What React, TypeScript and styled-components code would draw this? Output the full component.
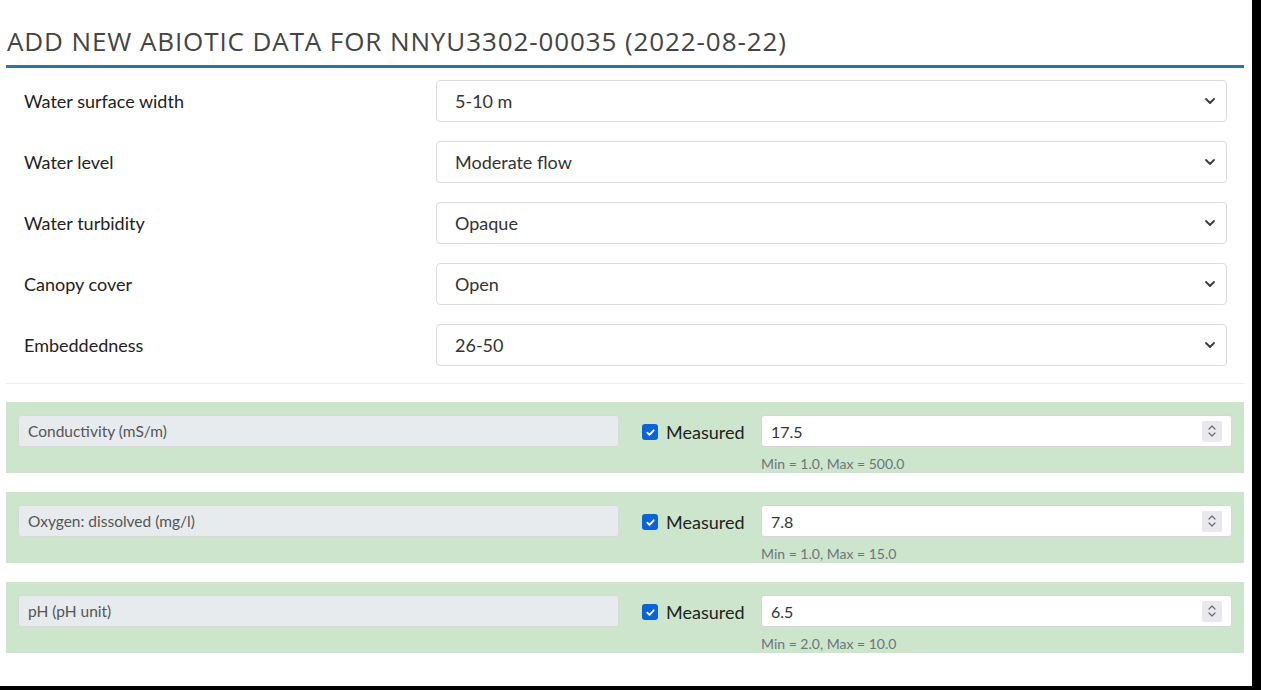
import React from 'react';
import styled, { createGlobalStyle } from 'styled-components';

const GlobalStyle = createGlobalStyle`
  html, body {
    margin: 0;
    padding: 0;
    background: #000;
  }
  * {
    box-sizing: border-box;
  }
`;

const Page = styled.div`
  width: 1252px;
  height: 686px;
  background: #fff;
  padding: 0 8px 0 6px;
  font-family: Lato, 'Open Sans', sans-serif;
  color: #222;
  overflow: hidden;
`;

const Title = styled.h1`
  margin: 0;
  padding: 27px 0 9px 1px;
  font-family: 'Open Sans', 'DejaVu Sans', sans-serif;
  font-weight: 400;
  font-size: 26px;
  letter-spacing: 0.9px;
  color: #444;
  line-height: 29px;
  border-bottom: 3px solid #2f7598;
`;

const SelectList = styled.div`
  display: flex;
  flex-direction: column;
  gap: 19px;
  padding: 12px 17px 17px 18px;
  border-bottom: 1px solid #eeeeee;
`;

const FieldRow = styled.div`
  display: grid;
  grid-template-columns: 394px 1fr;
  column-gap: 18px;
  align-items: center;
`;

const FieldLabel = styled.label`
  font-size: 18px;
  color: #222;
`;

const SelectWrap = styled.div`
  position: relative;
`;

const Select = styled.select`
  appearance: none;
  width: 100%;
  height: 42px;
  padding: 0 40px 0 18px;
  border: 1px solid #dcdcdc;
  border-radius: 4px;
  background: #fff;
  font-family: Lato, sans-serif;
  font-size: 18px;
  color: #333;
  outline: none;
`;

const Chevron = styled.svg`
  position: absolute;
  right: 11px;
  top: 16px;
  pointer-events: none;
`;

const Measures = styled.div`
  display: flex;
  flex-direction: column;
  gap: 19px;
  padding-top: 18px;
`;

const MeasurePanel = styled.div`
  background: #cce5cc;
  height: 71px;
  padding: 13px 12px 0 12px;
  display: grid;
  grid-template-columns: 601px 142px 1fr;
  align-items: start;
`;

const ReadonlyBox = styled.div`
  height: 32px;
  border: 1px solid #d4dad4;
  border-radius: 3px;
  background: #e8ebee;
  padding: 0 9px;
  display: flex;
  align-items: center;
  font-size: 15.5px;
  color: #555;
`;

const CheckLabel = styled.label`
  height: 34px;
  display: flex;
  align-items: center;
  gap: 8px;
  padding-left: 23px;
  font-size: 18px;
  color: #222;
`;

const CheckBox = styled.span`
  width: 16px;
  height: 16px;
  border-radius: 3px;
  background: #0b63d8;
  display: inline-flex;
  align-items: center;
  justify-content: center;
`;

const ValueCol = styled.div`
  display: flex;
  flex-direction: column;
`;

const NumberBox = styled.div`
  height: 32px;
  border: 1px solid #d6d6d6;
  border-radius: 3px;
  background: #fff;
  display: flex;
  align-items: center;
  padding: 0 9px 0 9px;
`;

const NumberInput = styled.input`
  flex: 1;
  border: none;
  outline: none;
  background: transparent;
  font-family: Lato, sans-serif;
  font-size: 16px;
  color: #333;
  padding: 0;
`;

const Spinner = styled.span`
  width: 20px;
  height: 21px;
  background: #e9e9ed;
  border-radius: 2px;
  display: flex;
  align-items: center;
  justify-content: center;
`;

const Help = styled.div`
  margin-top: 9px;
  font-size: 14px;
  color: #6c757d;
  line-height: 16px;
`;

const selects = [
  { label: 'Water surface width', value: '5-10 m' },
  { label: 'Water level', value: 'Moderate flow' },
  { label: 'Water turbidity', value: 'Opaque' },
  { label: 'Canopy cover', value: 'Open' },
  { label: 'Embeddedness', value: '26-50' },
];

const measures = [
  { name: 'Conductivity (mS/m)', value: '17.5', min: '1.0', max: '500.0' },
  { name: 'Oxygen: dissolved (mg/l)', value: '7.8', min: '1.0', max: '15.0' },
  { name: 'pH (pH unit)', value: '6.5', min: '2.0', max: '10.0' },
];

export default function App() {
  return (
    <>
      <GlobalStyle />
      <Page>
        <Title>ADD NEW ABIOTIC DATA FOR NNYU3302-00035 (2022-08-22)</Title>

        <SelectList>
          {selects.map((s) => (
            <FieldRow key={s.label}>
              <FieldLabel>{s.label}</FieldLabel>
              <SelectWrap>
                <Select defaultValue={s.value}>
                  <option>{s.value}</option>
                </Select>
                <Chevron width="12" height="10" viewBox="0 0 12 10">
                  <path d="M2 3l4 4 4-4" fill="none" stroke="#343a40" strokeWidth="1.8" strokeLinecap="round" strokeLinejoin="round" />
                </Chevron>
              </SelectWrap>
            </FieldRow>
          ))}
        </SelectList>

        <Measures>
          {measures.map((m) => (
            <MeasurePanel key={m.name}>
              <ReadonlyBox>{m.name}</ReadonlyBox>
              <CheckLabel>
                <CheckBox>
                  <svg width="11" height="11" viewBox="0 0 12 12">
                    <path d="M2.5 6.2l2.4 2.4 4.6-5" fill="none" stroke="#fff" strokeWidth="2" strokeLinecap="round" strokeLinejoin="round" />
                  </svg>
                </CheckBox>
                Measured
              </CheckLabel>
              <ValueCol>
                <NumberBox>
                  <NumberInput type="text" defaultValue={m.value} />
                  <Spinner>
                    <svg width="10" height="16" viewBox="0 0 10 16">
                      <path d="M2 6l3-3 3 3M2 10l3 3 3-3" fill="none" stroke="#6b6b70" strokeWidth="1.2" strokeLinecap="round" strokeLinejoin="round" />
                    </svg>
                  </Spinner>
                </NumberBox>
                <Help>
                  Min = {m.min}, Max = {m.max}
                </Help>
              </ValueCol>
            </MeasurePanel>
          ))}
        </Measures>
      </Page>
    </>
  );
}
